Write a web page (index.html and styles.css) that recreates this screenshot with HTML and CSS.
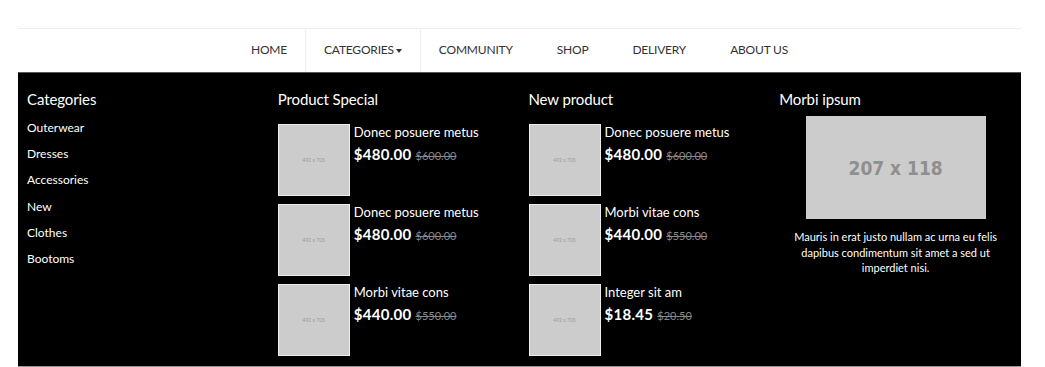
FILE: index.html
```html
<!DOCTYPE html>
<html lang="en">
<head>
    <meta charset="UTF-8">
    <meta name="viewport" content="width=device-width, initial-scale=1.0">
    <title>Shop - Mega Menu</title>
    <link rel="stylesheet" href="styles.css">
</head>
<body>
    <div class="container">
        <nav class="main-nav">
            <ul class="menu">
                <li><a href="#">Home</a></li>
                <li class="active"><a href="#">Categories<span class="caret"></span></a></li>
                <li><a href="#">Community</a></li>
                <li><a href="#">Shop</a></li>
                <li><a href="#">Delivery</a></li>
                <li><a href="#">About us</a></li>
            </ul>
        </nav>

        <div class="mega-menu">
            <div class="mega-col">
                <h3>Categories</h3>
                <ul class="cat-list">
                    <li><a href="#">Outerwear</a></li>
                    <li><a href="#">Dresses</a></li>
                    <li><a href="#">Accessories</a></li>
                    <li><a href="#">New</a></li>
                    <li><a href="#">Clothes</a></li>
                    <li><a href="#">Bootoms</a></li>
                </ul>
            </div>

            <div class="mega-col">
                <h3>Product Special</h3>
                <div class="product">
                    <div class="thumb">492 x 705</div>
                    <div class="info">
                        <p class="name">Donec posuere metus</p>
                        <p class="price">$480.00 <del>$600.00</del></p>
                    </div>
                </div>
                <div class="product">
                    <div class="thumb">492 x 705</div>
                    <div class="info">
                        <p class="name">Donec posuere metus</p>
                        <p class="price">$480.00 <del>$600.00</del></p>
                    </div>
                </div>
                <div class="product">
                    <div class="thumb">492 x 705</div>
                    <div class="info">
                        <p class="name">Morbi vitae cons</p>
                        <p class="price">$440.00 <del>$550.00</del></p>
                    </div>
                </div>
            </div>

            <div class="mega-col">
                <h3>New product</h3>
                <div class="product">
                    <div class="thumb">492 x 705</div>
                    <div class="info">
                        <p class="name">Donec posuere metus</p>
                        <p class="price">$480.00 <del>$600.00</del></p>
                    </div>
                </div>
                <div class="product">
                    <div class="thumb">492 x 705</div>
                    <div class="info">
                        <p class="name">Morbi vitae cons</p>
                        <p class="price">$440.00 <del>$550.00</del></p>
                    </div>
                </div>
                <div class="product">
                    <div class="thumb">492 x 705</div>
                    <div class="info">
                        <p class="name">Integer sit am</p>
                        <p class="price">$18.45 <del>$20.50</del></p>
                    </div>
                </div>
            </div>

            <div class="mega-col">
                <h3>Morbi ipsum</h3>
                <div class="banner">207 x 118</div>
                <p class="banner-text">Mauris in erat justo nullam ac urna eu felis dapibus condimentum sit amet a sed ut imperdiet nisi.</p>
            </div>
        </div>
    </div>
</body>
</html>
```

FILE: styles.css
```css
* {
    margin: 0;
    padding: 0;
    box-sizing: border-box;
}

body {
    font-family: 'Lato', 'Open Sans', sans-serif;
    background-color: #fff;
    color: #333;
}

a {
    color: inherit;
    text-decoration: none;
}

ul {
    list-style: none;
}

.container {
    width: 1003px;
    margin: 0 18px;
    padding-top: 28px;
}

/* top navigation */
.main-nav {
    border-top: 1px solid #eee;
}

.menu {
    display: flex;
    justify-content: center;
    height: 43px;
}

.menu li {
    display: flex;
    align-items: center;
    padding: 0 22px 2px;
    font-size: 12px;
    text-transform: uppercase;
    letter-spacing: -0.2px;
}

.menu li:first-child {
    padding-right: 18px;
}

.menu li.active {
    padding: 0 18px 2px;
    border-left: 1px solid #eee;
    border-right: 1px solid #eee;
}

.menu li.active + li {
    padding-left: 18px;
}

.caret {
    display: inline-block;
    margin-left: 2px;
    vertical-align: middle;
    border-top: 4px solid #333;
    border-left: 3px solid transparent;
    border-right: 3px solid transparent;
}

/* dropdown */
.mega-menu {
    display: grid;
    grid-template-columns: repeat(4, 1fr);
    background-color: #000;
    color: #fff;
    border-top: 1px solid #555;
    border-bottom: 1px solid #999;
    height: 295px;
    padding: 16px 0 0;
}

.mega-col {
    padding: 0 9px;
}

.mega-col h3 {
    font-weight: 400;
    font-size: 15px;
    line-height: 20px;
    margin-bottom: 15px;
    letter-spacing: -0.1px;
}

.cat-list {
    margin-top: -4px;
}

.cat-list li {
    font-size: 12px;
    line-height: 16px;
    margin-bottom: 10.2px;
}

.product {
    display: flex;
    margin-bottom: 8px;
}

.thumb {
    width: 72px;
    height: 72px;
    flex-shrink: 0;
    background-color: #ccc;
    border: 1px solid #eee;
    color: #999;
    font-size: 5px;
    display: flex;
    align-items: center;
    justify-content: center;
}

.info {
    padding-left: 4px;
}

.name {
    font-size: 13px;
    line-height: 16px;
}

.price {
    margin-top: 5px;
    font-size: 15px;
    font-weight: 700;
    letter-spacing: 0.3px;
}

.price del {
    font-size: 11px;
    font-weight: 400;
    color: #888;
    letter-spacing: 0;
}

.banner {
    width: 180px;
    height: 103px;
    margin: -8px auto 0;
    background-color: #ccc;
    color: #8f8f8f;
    font-family: 'DejaVu Sans Condensed', 'DejaVu Sans', sans-serif;
    font-weight: 700;
    font-size: 19px;
    display: flex;
    align-items: center;
    justify-content: center;
}

.banner-text {
    margin-top: 10px;
    font-size: 11px;
    line-height: 15.5px;
    text-align: center;
    padding: 0 12px;
}
```
